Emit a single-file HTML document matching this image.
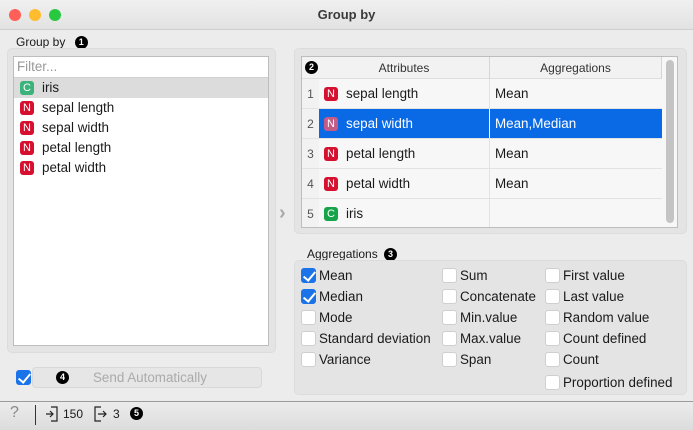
<!DOCTYPE html>
<html><head><style>
*{box-sizing:border-box;margin:0;padding:0}
body{width:693px;height:430px;overflow:hidden;background:#ececec;font-family:"Liberation Sans",sans-serif;font-size:13.4px;color:#1a1a1a;position:relative}
.a{position:absolute}
.title{left:0;top:0;width:693px;height:30px;background:linear-gradient(#f0f0f0,#e2e2e2);border-bottom:1px solid #cfcfcf;text-align:center;font-weight:bold;line-height:30px;color:#3a3a3a;font-size:13px}
.dot{width:12px;height:12px;border-radius:50%;top:9px}
.box{background:#e4e4e4;border:1px solid #dcdcdc;border-radius:5px}
.badge{display:inline-block;width:13px;height:13px;border-radius:50%;background:#000;color:#fff;font-size:9px;font-weight:bold;text-align:center;line-height:13px;vertical-align:middle}
.ic{display:inline-block;width:14px;height:14px;border-radius:3px;color:#fff;font-size:11px;text-align:center;line-height:14px;vertical-align:top;margin-top:3px;margin-right:8px}
.tr .ic{margin-top:8px}
.N{background:#d6102f}.C{background:#16a34a}
.row{position:absolute;left:0;height:20px;line-height:20px;padding-left:6px;width:100%}
.tr{position:absolute;left:0;width:360px;height:30px;line-height:30px;border-bottom:1px solid #e2e2e2}
.tr .n{position:absolute;left:0;width:17px;text-align:center;color:#555;font-size:12px;background:#f2f2f2;height:29px}
.tr .c1{position:absolute;left:17px;width:171px;padding-left:5px;border-right:1px solid #e2e2e2;height:29px}
.tr .c2{position:absolute;left:188px;width:172px;padding-left:5px;height:29px}
.cb{position:absolute;width:15px;height:15px;border:1px solid #cfcfcf;background:#fff;border-radius:3px}
.cb.on{background:#1a73e8;border-color:#1a73e8}
.cb.on::after{content:"";position:absolute;left:4px;top:0px;width:5px;height:10px;border:solid #fff;border-width:0 2px 2px 0;transform:rotate(40deg)}
.lb{position:absolute}
</style></head><body>
<div class="a title">Group by</div>
<div class="a dot" style="left:9px;background:#fe5f57"></div>
<div class="a dot" style="left:29px;background:#febc2e"></div>
<div class="a dot" style="left:49px;background:#28c840"></div>

<div class="a" style="left:16px;top:35px;font-size:12px">Group by <span class="badge" style="margin-left:6px">1</span></div>
<div class="a box" style="left:7px;top:48px;width:269px;height:305px"></div>
<div class="a" style="left:13px;top:56px;width:256px;height:290px;background:#fff;border:1px solid #bdbdbd">
 <div style="height:21px;border-bottom:1px solid #d0d0d0;color:#999;padding-left:3px;line-height:20px">Filter...</div>
 <div class="row" style="top:21px;background:#dcdcdc"><span class="ic C" style="background:#3cb37a">C</span>iris</div>
 <div class="row" style="top:41px"><span class="ic N">N</span>sepal length</div>
 <div class="row" style="top:61px"><span class="ic N">N</span>sepal width</div>
 <div class="row" style="top:81px"><span class="ic N">N</span>petal length</div>
 <div class="row" style="top:101px"><span class="ic N">N</span>petal width</div>
</div>

<div class="a" style="left:279px;top:202px;color:#aaa;font-size:20px;font-weight:bold">›</div>

<div class="a box" style="left:294px;top:48px;width:393px;height:186px"></div>
<div class="a" style="left:301px;top:56px;width:377px;height:172px;background:#f7f7f7;border:1px solid #bdbdbd;overflow:hidden">
 <div class="a" style="left:0;top:0;width:360px;height:22px;background:#f2f2f2;border-bottom:1px solid #ddd;font-size:12px;line-height:22px;color:#333">
  <span class="badge" style="position:absolute;left:3px;top:4px">2</span>
  <div class="a" style="left:17px;width:171px;text-align:center;border-right:1px solid #d5d5d5;height:22px">Attributes</div>
  <div class="a" style="left:188px;width:172px;text-align:center;border-right:1px solid #d5d5d5;height:22px">Aggregations</div>
 </div>
 <div class="tr" style="top:22px"><div class="n">1</div><div class="c1"><span class="ic N">N</span>sepal length</div><div class="c2">Mean</div></div>
 <div class="tr" style="top:52px"><div class="n">2</div><div class="c1" style="background:#0a69e4;color:#fff;border-right-color:#fff"><span class="ic N" style="background:#c25b86">N</span>sepal width</div><div class="c2" style="background:#0a69e4;color:#fff">Mean,Median</div></div>
 <div class="tr" style="top:82px"><div class="n">3</div><div class="c1"><span class="ic N">N</span>petal length</div><div class="c2">Mean</div></div>
 <div class="tr" style="top:112px"><div class="n">4</div><div class="c1"><span class="ic N">N</span>petal width</div><div class="c2">Mean</div></div>
 <div class="tr" style="top:142px;border:0"><div class="n">5</div><div class="c1"><span class="ic C">C</span>iris</div><div class="c2"></div></div>
 <div class="a" style="left:364px;top:3px;width:8px;height:163px;border-radius:4px;background:#c4c4c4"></div>
</div>

<div class="a" style="left:307px;top:247px;font-size:12px">Aggregations <span class="badge" style="margin-left:3px">3</span></div>
<div class="a box" style="left:294px;top:260px;width:393px;height:135px"></div>
<div class="cb on" style="left:301px;top:268px"></div><div class="lb" style="left:319px;top:268px">Mean</div>
<div class="cb on" style="left:301px;top:289px"></div><div class="lb" style="left:319px;top:289px">Median</div>
<div class="cb" style="left:301px;top:310px"></div><div class="lb" style="left:319px;top:310px">Mode</div>
<div class="cb" style="left:301px;top:331px"></div><div class="lb" style="left:319px;top:331px">Standard deviation</div>
<div class="cb" style="left:301px;top:352px"></div><div class="lb" style="left:319px;top:352px">Variance</div>
<div class="cb" style="left:442px;top:268px"></div><div class="lb" style="left:460px;top:268px">Sum</div>
<div class="cb" style="left:442px;top:289px"></div><div class="lb" style="left:460px;top:289px">Concatenate</div>
<div class="cb" style="left:442px;top:310px"></div><div class="lb" style="left:460px;top:310px">Min.value</div>
<div class="cb" style="left:442px;top:331px"></div><div class="lb" style="left:460px;top:331px">Max.value</div>
<div class="cb" style="left:442px;top:352px"></div><div class="lb" style="left:460px;top:352px">Span</div>
<div class="cb" style="left:545px;top:268px"></div><div class="lb" style="left:563px;top:268px">First value</div>
<div class="cb" style="left:545px;top:289px"></div><div class="lb" style="left:563px;top:289px">Last value</div>
<div class="cb" style="left:545px;top:310px"></div><div class="lb" style="left:563px;top:310px">Random value</div>
<div class="cb" style="left:545px;top:331px"></div><div class="lb" style="left:563px;top:331px">Count defined</div>
<div class="cb" style="left:545px;top:352px"></div><div class="lb" style="left:563px;top:352px">Count</div>
<div class="cb" style="left:545px;top:375px"></div><div class="lb" style="left:563px;top:375px">Proportion defined</div>

<div class="cb on" style="left:16px;top:370px"></div>
<div class="a" style="left:32px;top:367px;width:230px;height:21px;border:1px solid #d8d8d8;border-radius:4px;background:#e6e6e6;line-height:20px;color:#aaa">
 <span class="badge" style="position:absolute;left:23px;top:3px">4</span>
 <span style="position:absolute;left:60px">Send Automatically</span></div>

<div class="a" style="left:0;top:401px;width:693px;height:29px;border-top:1px solid #9a9a9a;background:linear-gradient(#ececec,#dcdcdc)"></div>
<div class="a" style="left:10px;top:404px;color:#888;font-size:16px">?</div>
<div class="a" style="left:35px;top:405px;width:1px;height:20px;background:#333"></div>
<svg class="a" style="left:45px;top:406px" width="14" height="16"><path d="M6 1h6v14H6M1 8h7M5 5l3 3-3 3" fill="none" stroke="#222" stroke-width="1.2"/></svg>
<div class="a" style="left:63px;top:407px;font-size:12px">150</div>
<svg class="a" style="left:93px;top:406px" width="14" height="16"><path d="M8 1H2v14h6M5 8h8M10 5l3 3-3 3" fill="none" stroke="#222" stroke-width="1.2"/></svg>
<div class="a" style="left:113px;top:407px;font-size:12px">3</div>
<span class="badge a" style="left:130px;top:407px">5</span>
</body></html>
